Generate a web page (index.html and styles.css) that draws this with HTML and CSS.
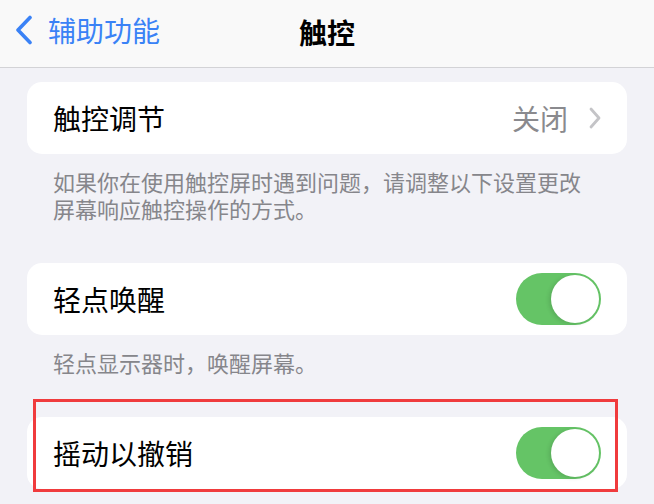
FILE: index.html
```html
<!DOCTYPE html>
<html lang="zh-CN">
<head>
<meta charset="utf-8">
<link rel="stylesheet" href="styles.css">
</head>
<body>
<header class="nav">
  <div class="back">
    <svg class="back-icon" width="20" height="30" viewBox="0 0 20 30"><path d="M16 2.5 L4 15 L16 27.5" fill="none" stroke="#3a82f6" stroke-width="3.6" stroke-linecap="round" stroke-linejoin="round"/></svg>
    <span class="back-label">辅助功能</span>
  </div>
  <h1 class="title">触控</h1>
</header>
<main class="content">
  <section class="group">
    <div class="card row">
      <span class="label">触控调节</span>
      <span class="value">关闭<svg class="chev" width="14" height="24" viewBox="0 0 14 24"><path d="M3 3 L11 12 L3 21" fill="none" stroke="#c4c4c7" stroke-width="2.8" stroke-linecap="round" stroke-linejoin="round"/></svg></span>
    </div>
    <p class="note">如果你在使用触控屏时遇到问题，请调整以下设置更改屏幕响应触控操作的方式。</p>
  </section>
  <section class="group">
    <div class="card row">
      <span class="label">轻点唤醒</span>
      <span class="toggle"><span class="knob"></span></span>
    </div>
    <p class="note">轻点显示器时，唤醒屏幕。</p>
  </section>
  <section class="group highlighted">
    <div class="card row">
      <span class="label">摇动以撤销</span>
      <span class="toggle"><span class="knob"></span></span>
    </div>
    <div class="mark"></div>
  </section>
</main>
</body>
</html>
```
FILE: styles.css
```css
* { box-sizing: border-box; }
html, body { margin: 0; padding: 0; }
body {
  width: 654px;
  height: 504px;
  overflow: hidden;
  background: #f2f2f7;
  font-family: "Noto Sans CJK SC", "Noto Sans", sans-serif;
  color: #000;
}
.nav {
  height: 68px;
  background: #f9f9f9;
  border-bottom: 1px solid #d3d3d6;
  display: flex;
  align-items: center;
  justify-content: center;
  position: relative;
}
.back {
  position: absolute;
  left: 14px;
  top: 15px;
  display: flex;
  align-items: center;
  gap: 14px;
}
.back-icon { display: block; }
.back-label {
  font-size: 28px;
  line-height: 30px;
  color: #3a82f6;
}
.title {
  margin: 0;
  margin-top: -4px;
  font-size: 28px;
  line-height: 30px;
  font-weight: 700;
}
.content {
  padding: 14px 27px 0 27px;
}
.group { margin-bottom: 41px; }
.group.highlighted {
  position: relative;
  margin-top: 2px;
  margin-bottom: 0;
}
.card {
  background: #fff;
  border-radius: 15px;
}
.row {
  height: 72px;
  display: flex;
  align-items: center;
  justify-content: space-between;
  padding: 0 26px 0 26px;
}
.label {
  font-size: 28px;
  line-height: 30px;
}
.value {
  display: flex;
  align-items: center;
  gap: 20px;
  font-size: 28px;
  line-height: 30px;
  color: #8a8a8e;
}
.chev { display: block; margin-right: -1px; }
.note {
  margin: 14px 0 0 0;
  padding: 0 26px;
  font-size: 22px;
  line-height: 27px;
  color: #86868b;
}
.toggle {
  width: 85px;
  height: 52px;
  border-radius: 26px;
  background: #65c466;
  display: flex;
  align-items: center;
  justify-content: flex-end;
  padding-right: 2px;
}
.knob {
  width: 48px;
  height: 48px;
  border-radius: 50%;
  background: #fff;
  box-shadow: -2px 1px 4px rgba(0,0,0,0.12);
}
.mark {
  position: absolute;
  top: -18px;
  left: 6px;
  right: 9px;
  bottom: -3px;
  border: 3px solid #f03b3d;
}
```
